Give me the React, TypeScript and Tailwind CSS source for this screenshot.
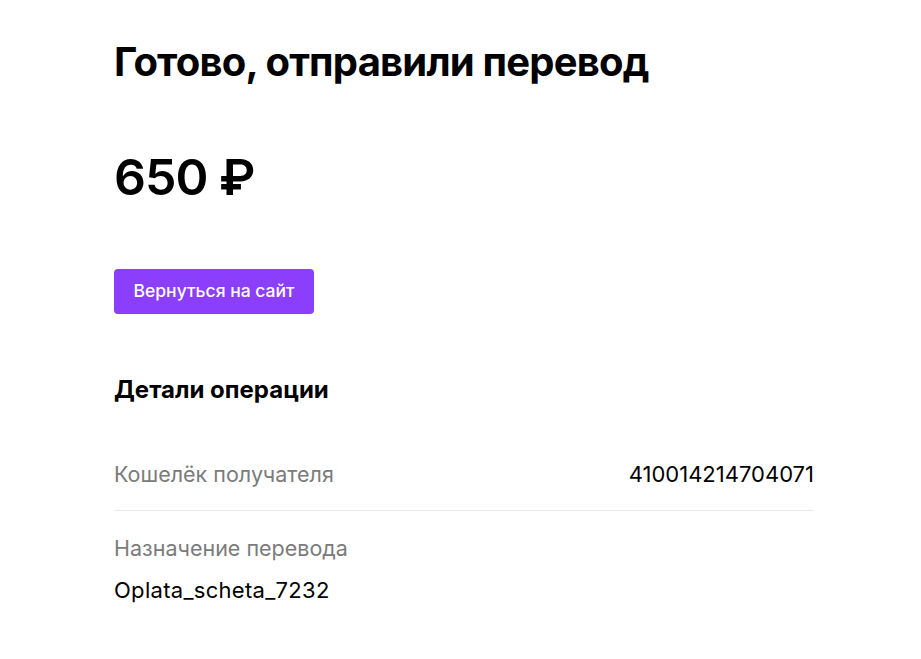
export default function App() {
  return (
    <div className="min-h-screen bg-white pl-[114px] pt-[38px] font-['Inter',sans-serif] text-black">
      <div className="w-[700px]">
        <h1 className="text-[40px] font-bold leading-[48px] tracking-[-0.8px]">Готово, отправили перевод</h1>
        <div className="mt-[61px] text-[50px] font-semibold leading-[60px] tracking-[-1px]">650 ₽</div>
        <button className="mt-[62px] flex h-[45px] w-[200px] items-center justify-center rounded-[4px] bg-[#8b3ffd] text-[17.5px] font-medium text-white">
          Вернуться на сайт
        </button>
        <h2 className="mt-[62px] text-[24px] font-bold leading-[28px]">Детали операции</h2>
        <div className="mt-[56px] flex items-start justify-between border-b border-[#ebebeb] pb-[22px]">
          <span className="text-[21.5px] leading-[28px] text-[#7b7b7b]">Кошелёк получателя</span>
          <span className="text-[22px] leading-[28px] text-black">410014214704071</span>
        </div>
        <div className="pt-[23px]">
          <div className="text-[21.5px] leading-[28px] text-[#7b7b7b]">Назначение перевода</div>
          <div className="mt-[14px] text-[22px] leading-[28px] tracking-[0.3px] text-black">Oplata_scheta_7232</div>
        </div>
      </div>
    </div>
  );
}
